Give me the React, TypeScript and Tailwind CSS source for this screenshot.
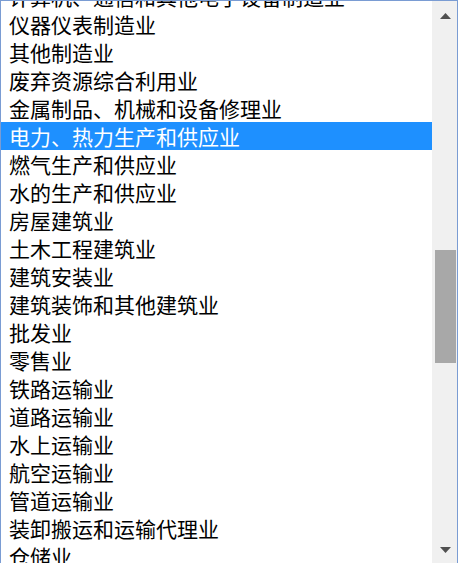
const items = [
  "计算机、通信和其他电子设备制造业",
  "仪器仪表制造业",
  "其他制造业",
  "废弃资源综合利用业",
  "金属制品、机械和设备修理业",
  "电力、热力生产和供应业",
  "燃气生产和供应业",
  "水的生产和供应业",
  "房屋建筑业",
  "土木工程建筑业",
  "建筑安装业",
  "建筑装饰和其他建筑业",
  "批发业",
  "零售业",
  "铁路运输业",
  "道路运输业",
  "水上运输业",
  "航空运输业",
  "管道运输业",
  "装卸搬运和运输代理业",
  "仓储业",
];

const selected = "电力、热力生产和供应业";

export default function App() {
  return (
    <div className="w-[458px] h-[563px] overflow-hidden bg-white border-l border-t border-r border-[#7a9cd3] flex font-['Microsoft_YaHei','Noto_Sans_CJK_SC',sans-serif]">
      {/* Options list */}
      <div className="w-[431px] overflow-hidden">
        <ul className="-mt-[19px]">
          {items.map((item) => (
            <li
              key={item}
              className={
                item === selected
                  ? "h-[28px] leading-[28px] pl-[8px] text-[21px] whitespace-nowrap bg-[#1e90ff] text-white"
                  : "h-[28px] leading-[28px] pl-[8px] text-[21px] whitespace-nowrap text-black"
              }
            >
              {item}
            </li>
          ))}
        </ul>
      </div>

      {/* Scrollbar */}
      <div className="w-[25px] h-full bg-[#f0f0f0] flex flex-col items-center">
        <svg width="11" height="7" viewBox="0 0 11 7" className="mt-[12px] ml-[1px]">
          <path d="M5.5 0 L11 6 L0 6 Z" fill="#505050" />
        </svg>
        <div className="mt-[230px] w-[21px] h-[113px] bg-[#a8a8a8] ml-[1px]" />
        <div className="flex-1" />
        <svg width="11" height="7" viewBox="0 0 11 7" className="mb-[9px] ml-[1px]">
          <path d="M0 0 L11 0 L5.5 6 Z" fill="#505050" />
        </svg>
      </div>
    </div>
  );
}
